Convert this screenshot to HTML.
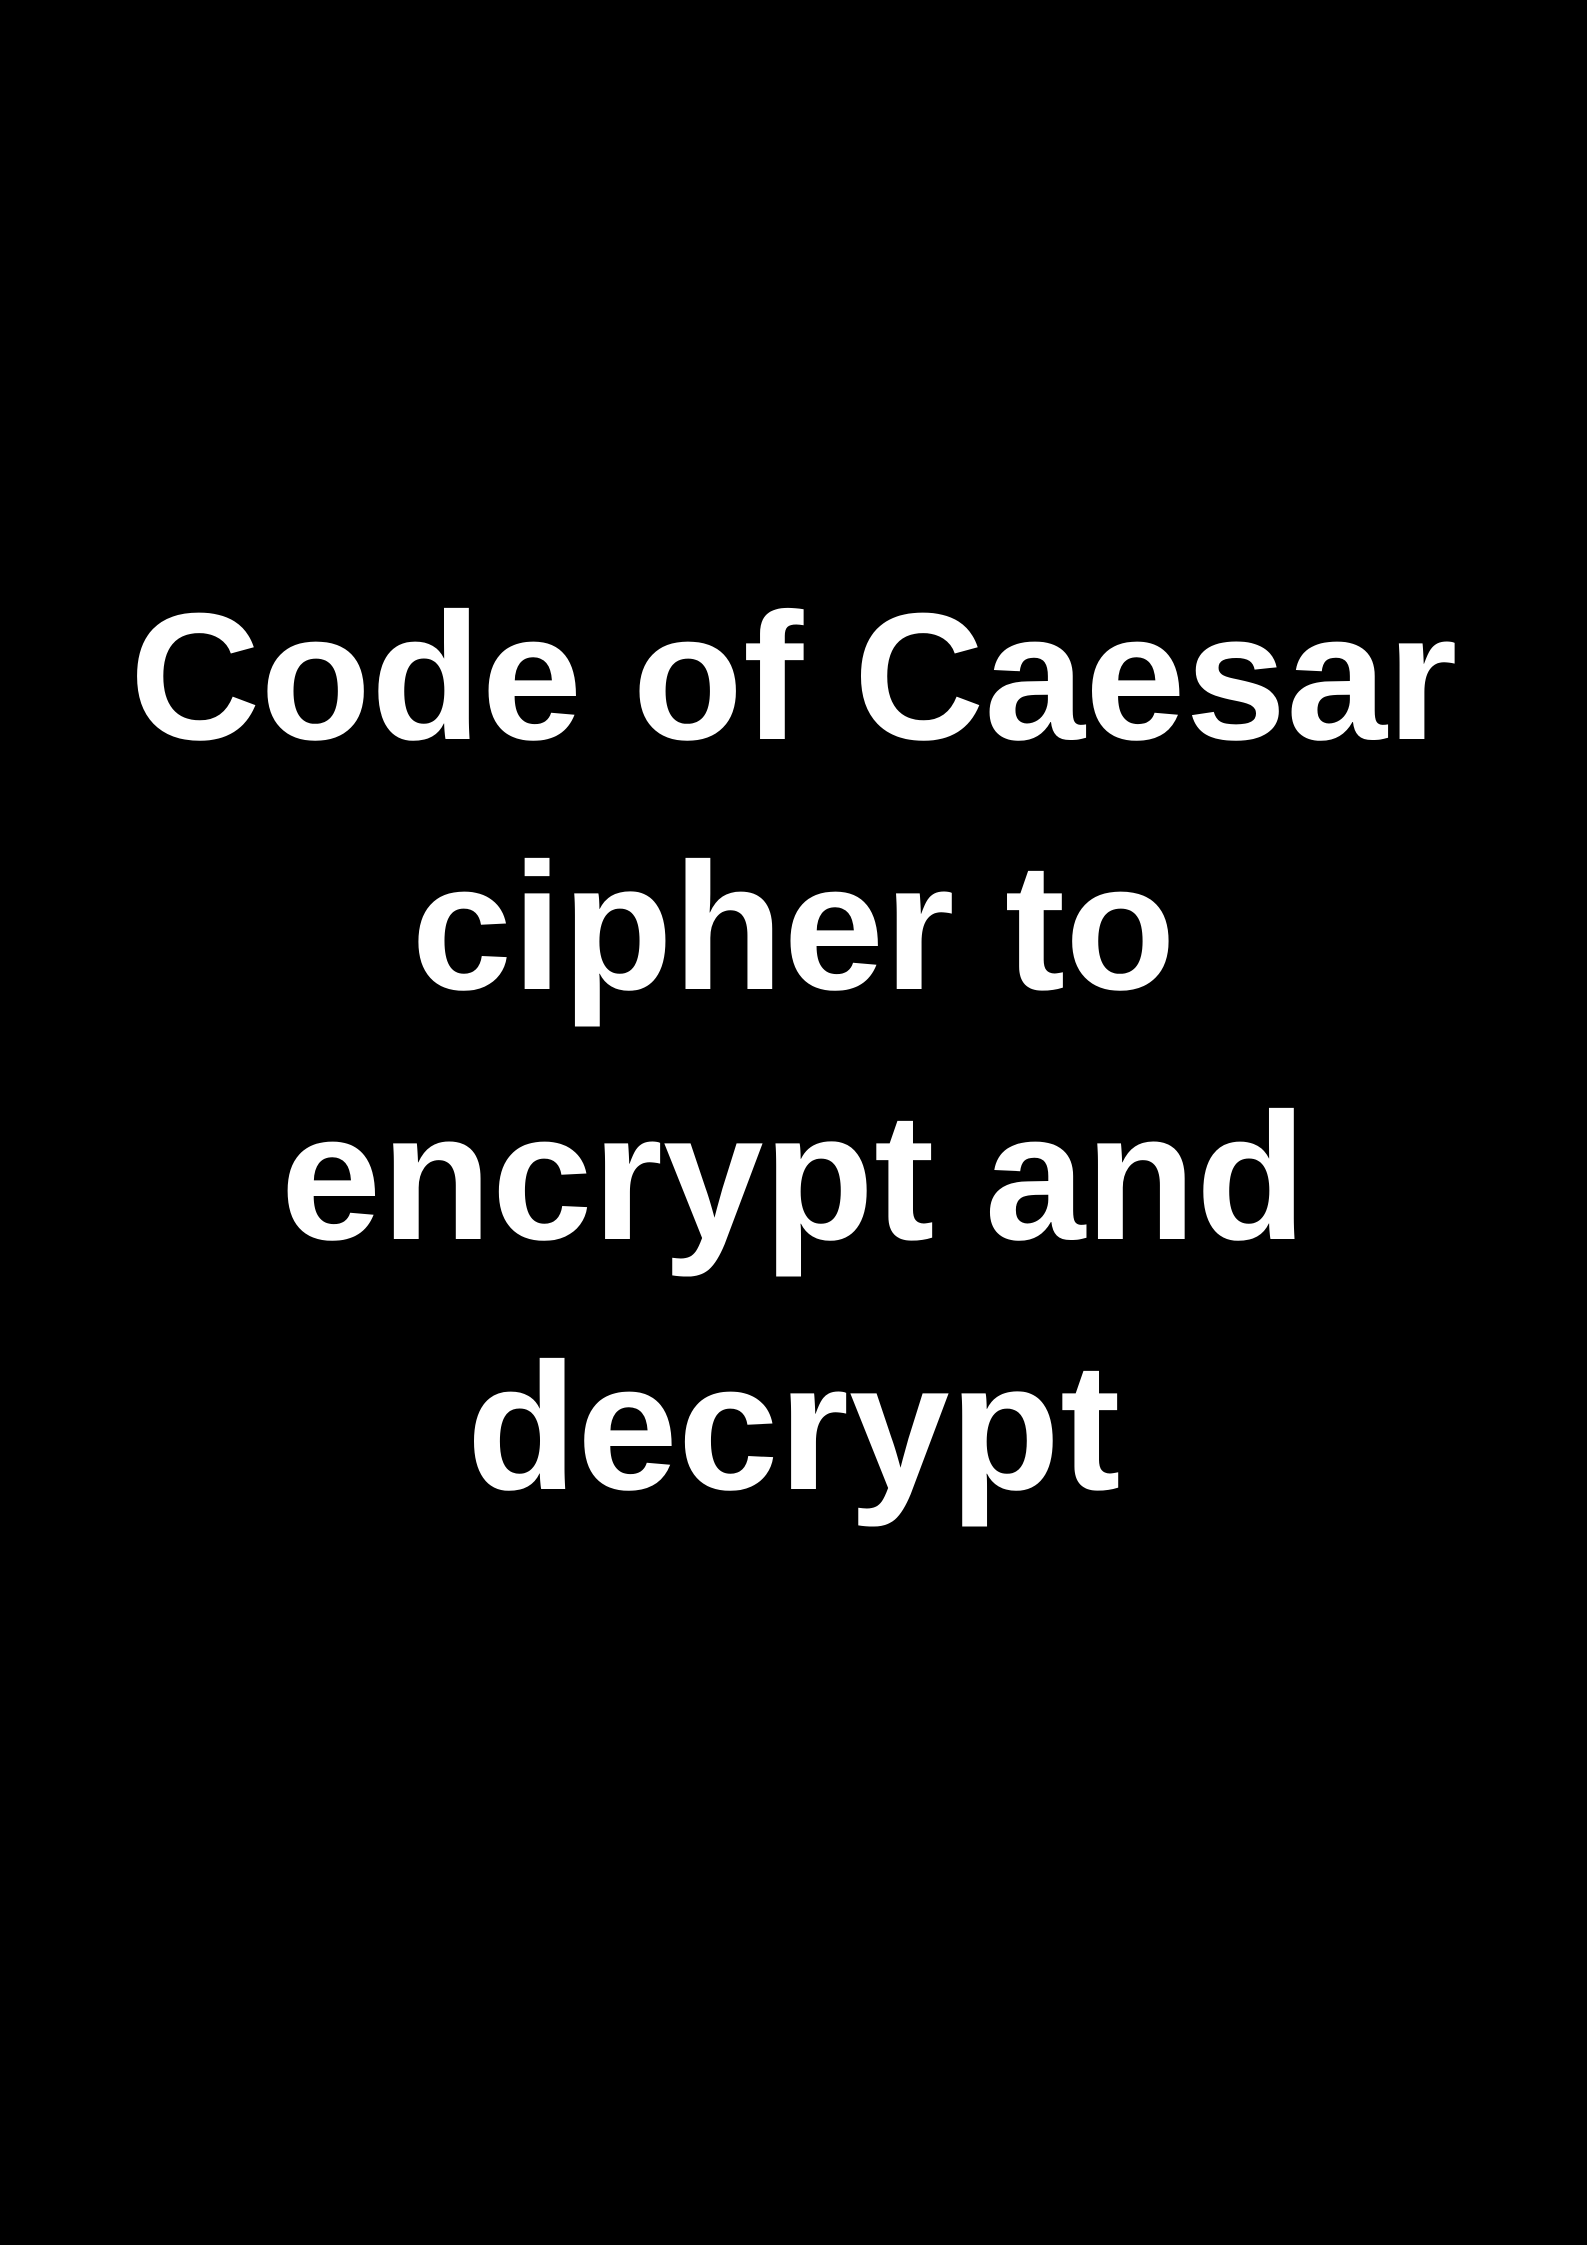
<!DOCTYPE html>
<html><head><meta charset="utf-8"><style>
html,body{margin:0;padding:0;background:#000;}
body{width:1587px;height:2245px;position:relative;overflow:hidden;}
.t{position:absolute;left:0;top:552px;width:1587px;text-align:center;color:#fff;
font-family:"Liberation Sans",sans-serif;font-weight:bold;font-size:181px;line-height:250px;letter-spacing:0px;}
</style></head><body>
<div class="t">Code of Caesar<br>cipher to<br>encrypt and<br>decrypt</div>
</body></html>
